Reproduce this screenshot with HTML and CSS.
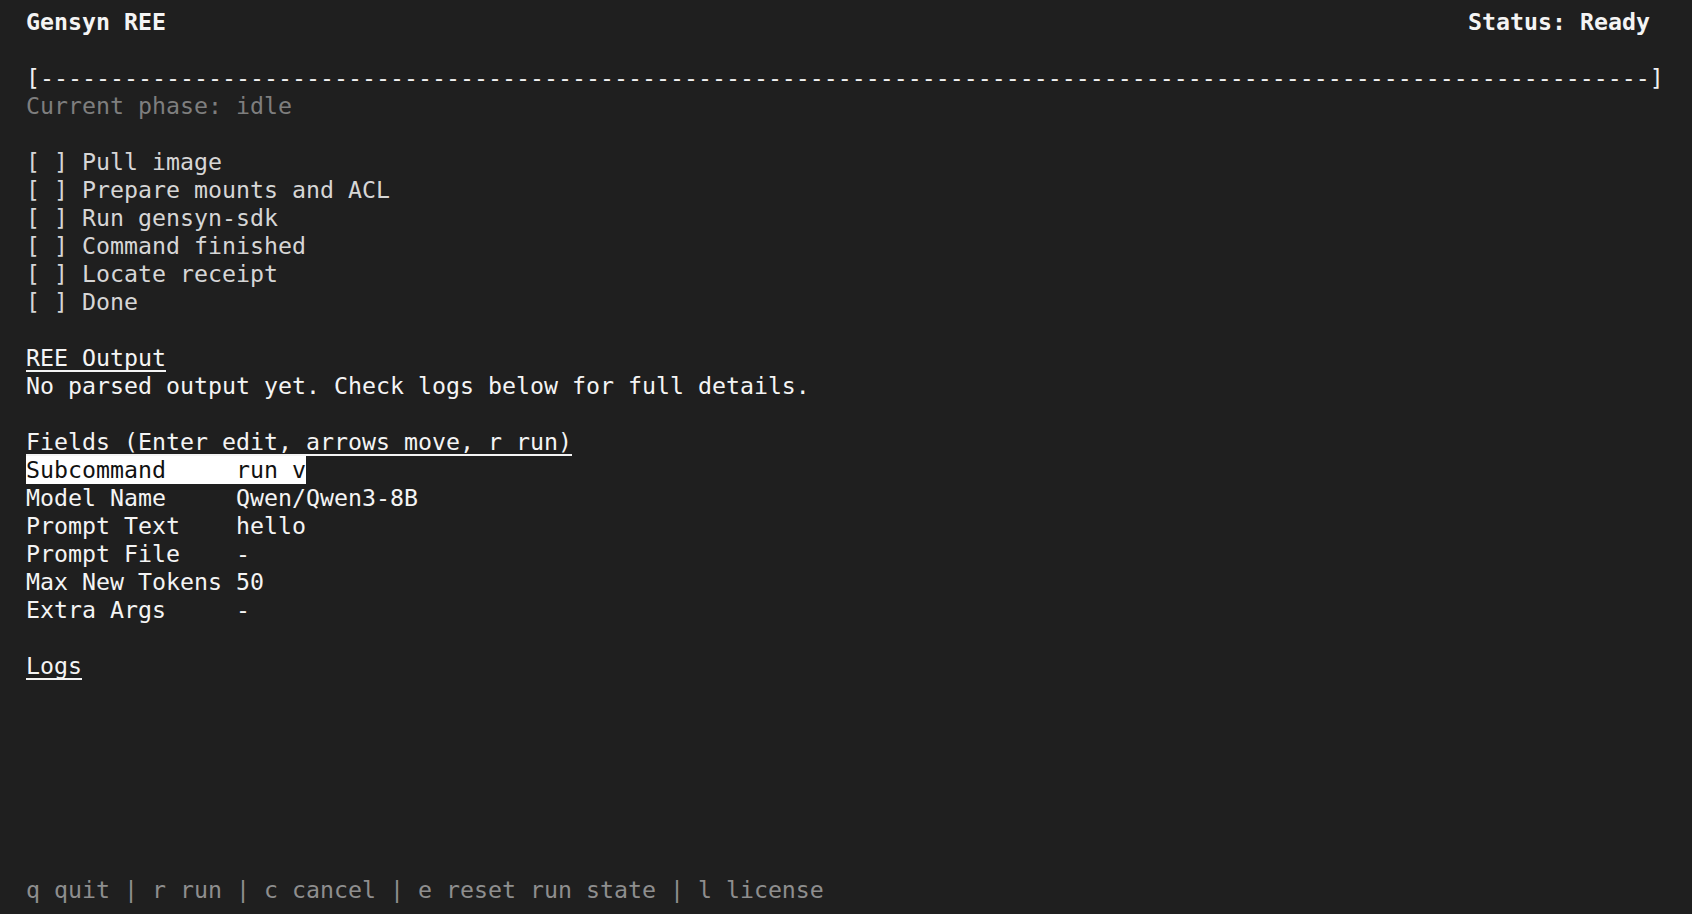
FILE: index.html
```html
<!DOCTYPE html>
<html lang="en">
<head>
<meta charset="utf-8">
<title>Gensyn REE</title>
<link rel="stylesheet" href="styles.css">
</head>
<body>
<div class="term">
  <div class="row header">
    <span class="bold">Gensyn REE</span>
    <span class="bold status">Status: Ready</span>
  </div>
  <div class="row"></div>
  <div class="row bar">[-------------------------------------------------------------------------------------------------------------------]</div>
  <div class="row dim">Current phase: idle</div>
  <div class="row"></div>
  <div class="row step">[ ] Pull image</div>
  <div class="row step">[ ] Prepare mounts and ACL</div>
  <div class="row step">[ ] Run gensyn-sdk</div>
  <div class="row step">[ ] Command finished</div>
  <div class="row step">[ ] Locate receipt</div>
  <div class="row step">[ ] Done</div>
  <div class="row"></div>
  <div class="row"><span class="ul">REE Output</span></div>
  <div class="row">No parsed output yet. Check logs below for full details.</div>
  <div class="row"></div>
  <div class="row"><span class="ul">Fields (Enter edit, arrows move, r run)</span></div>
  <div class="row"><span class="sel"><span class="label">Subcommand</span>run v</span></div>
  <div class="row"><span class="label">Model Name</span>Qwen/Qwen3-8B</div>
  <div class="row"><span class="label">Prompt Text</span>hello</div>
  <div class="row"><span class="label">Prompt File</span>-</div>
  <div class="row"><span class="label">Max New Tokens</span>50</div>
  <div class="row"><span class="label">Extra Args</span>-</div>
  <div class="row"></div>
  <div class="row"><span class="ul">Logs</span></div>
  <div class="row footer dim2">q quit | r run | c cancel | e reset run state | l license</div>
</div>
</body>
</html>
```

FILE: styles.css
```css
html, body {
  margin: 0;
  padding: 0;
  background: #1f1f1f;
}

.term {
  box-sizing: border-box;
  height: 100vh;
  display: flex;
  flex-direction: column;
  padding: 8px 26px 10px 26px;
  font-family: "DejaVu Sans Mono", "Liberation Mono", monospace;
  font-size: 23.25px;
  color: #f4f4f4;
  overflow: hidden;
}

.row {
  height: 28px;
  line-height: 28px;
  white-space: pre;
  flex: 0 0 28px;
}

.header {
  display: flex;
  justify-content: space-between;
}

.bold {
  font-weight: bold;
}

.status {
  padding-right: 16px;
}

.bar {
  color: #f0f0f0;
}

.dim {
  color: #7e7e7e;
}

.dim2 {
  color: #8e8e8e;
}

.step {
  color: #d6d6d6;
}

.ul {
  display: inline-block;
  height: 26px;
  line-height: 27px;
  border-bottom: 2px solid #f4f4f4;
  vertical-align: top;
}

.label {
  display: inline-block;
  width: 210px;
}

.sel {
  display: inline-block;
  background: #ffffff;
  color: #111111;
  height: 28px;
}

.footer {
  margin-top: auto;
}
```
